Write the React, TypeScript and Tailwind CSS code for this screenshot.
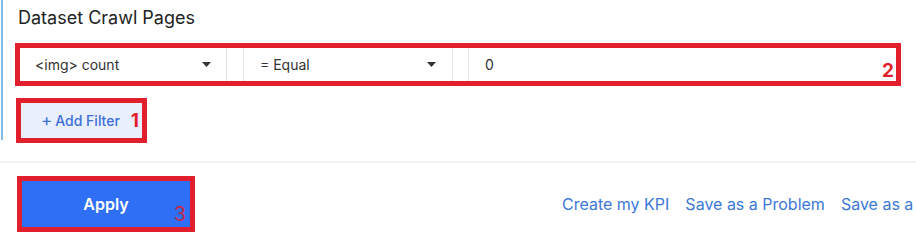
import React from 'react';

const RED = 'border-[#e21f2c]';

function Caret() {
  return (
    <svg width="9" height="5" viewBox="0 0 9 5" className="shrink-0">
      <path d="M0 0h9L4.5 5z" fill="#333" />
    </svg>
  );
}

export default function App() {
  return (
    <div
      className="relative w-[916px] h-[233px] overflow-hidden bg-white text-[#222]"
      style={{ fontFamily: 'Inter, "Noto Sans", sans-serif' }}
    >
      {/* card with left accent */}
      <div className="ml-px h-[140px] border-l-2 border-[#86bde9] pl-[12px]">
        <div className="h-[43px] pl-[3px] pt-[6px] text-[18px] leading-[24px] text-[#222]">
          Dataset Crawl Pages
        </div>

        {/* filter row, annotation 2 */}
        <div className={`relative flex h-[43px] w-[886px] border-[5px] ${RED}`}>
          <div className="flex w-[207px] items-center justify-between border-r border-[#e3e3e3] pl-[15px] pr-[15px] text-[14px] text-[#333]">
            <span>&lt;img&gt; count</span>
            <Caret />
          </div>
          <div className="w-[16px]" />
          <div className="flex w-[210px] items-center justify-between border-x border-[#e3e3e3] pl-[16px] pr-[16px] text-[14px] text-[#333]">
            <span>= Equal</span>
            <Caret />
          </div>
          <div className="w-[15px]" />
          <div className="flex flex-1 items-center border-l border-[#e3e3e3] pl-[16px] text-[14px] text-[#333]">
            0
          </div>
          <span className="absolute right-[2px] top-[13px] text-[19px] font-bold leading-none text-[#e21f2c]">
            2
          </span>
        </div>

        {/* add filter, annotation 1 */}
        <div className={`relative ml-px mt-[12px] h-[45px] w-[131px] border-[5px] ${RED} bg-[#e9effd]`}>
          <div className="flex h-full items-center pl-[20px] text-[14px] font-medium text-[#3c6fd8]">
            <span className="mr-[3px] text-[17px] font-normal leading-none">+</span>Add Filter
          </div>
          <span className="absolute right-[3px] top-[8px] text-[19px] font-bold leading-none text-[#e21f2c]">
            1
          </span>
        </div>
      </div>

      <div className="mt-[21px] h-[2px] bg-[#f3f3f3]" />

      {/* footer */}
      <div className="flex items-center pt-[13px] whitespace-nowrap">
        <div className={`relative ml-[17px] h-[56px] w-[178px] shrink-0 border-[5px] ${RED} bg-[#2f6ff5]`}>
          <div className="flex h-full items-center justify-center text-[16px] font-semibold text-white">
            Apply
          </div>
          <span className="absolute right-[4px] top-[23px] text-[20px] leading-none text-[#c42a4a]">
            3
          </span>
        </div>
        <div className="ml-[367px] flex shrink-0 gap-[16px] text-[16px] text-[#3c78d8]">
          <span>Create my KPI</span>
          <span>Save as a Problem</span>
          <span>Save as a</span>
        </div>
      </div>
    </div>
  );
}
